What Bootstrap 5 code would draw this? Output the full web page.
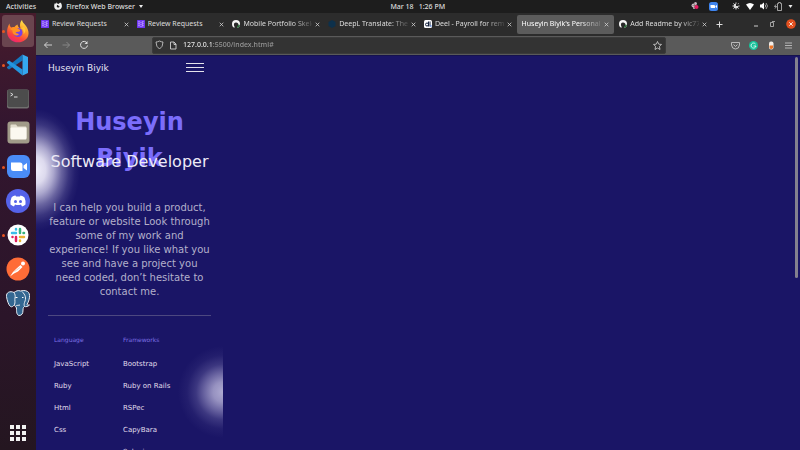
<!DOCTYPE html>
<html lang="en">
<head>
<meta charset="utf-8">
<meta name="viewport" content="width=device-width, initial-scale=1">
<title>Huseyin Biyik's Personal Portfolio</title>
<link href="https://cdn.jsdelivr.net/npm/bootstrap@5.3.0/dist/css/bootstrap.min.css" rel="stylesheet">
<style>
  body { background: #1a1566; font-family: "Noto Sans", "Open Sans", sans-serif; font-size: 7px; line-height: 12px; color: #dedede; }
  button, input { font: inherit; color: inherit; }
  button { background: none; border: 0; padding: 0; line-height: 1; display: flex; align-items: center; justify-content: center; }
  svg { display: block; flex: none; }
  .topbar { background: #1d1d1d; height: 13px; display: grid; grid-template-columns: 11fr auto 10fr; font-weight: 500; }
  .topbar .menus { gap: 18px; padding-left: 6px; }
  .topbar .clock { gap: 5px; }
  .topbar .tray { gap: 6px; padding-right: 7px; }
  .desktop, .browser { min-width: 0; min-height: 0; }
  .dock { width: 36px; padding: 2px 2px 1px; gap: 2px; background: linear-gradient(#471b2c, #33162f 25%, #2b1529 70%, #241620); }
  .launcher { position: relative; width: 32px; height: 32px; border-radius: 3px; flex: none; }
  .launcher.focused { background: #6a454f; }
  .launcher.running::before { content: ""; position: absolute; left: 0; top: 15px; width: 3px; height: 3px; border-radius: 50%; background: #e95420; }
  .tabstrip { background: #2c2c2c; height: 23px; padding: 2px 0 2px 2px; }
  .tab-list { min-width: 0; }
  .tab { flex: 1 1 0; min-width: 0; height: 19px; gap: 3px; padding: 0 5px 0 3px; border-radius: 2px; }
  .tab.current { background: #5c5c5c; padding-left: 5px; margin-right: 2px; color: #fff; }
  .tab-title { flex: 1 1 0; min-width: 0; overflow: hidden; white-space: nowrap; text-align: left; line-height: 12px; }
  .tab-title.faded { mask-image: linear-gradient(90deg, #000 72%, rgba(0,0,0,.15)); -webkit-mask-image: linear-gradient(90deg, #000 72%, rgba(0,0,0,.15)); }
  .window-tools { width: 88px; padding: 0 4px; gap: 11px; }
  .toolbar { background: #5a5a5a; height: 20px; padding: 0 8px 0 7px; }
  .nav-tools { width: 109px; gap: 8px; }
  .address { background: #333; height: 17px; border-radius: 2px; padding: 0 3px 0 2px; gap: 5px; border: 1px solid #3b3b3b; }
  .address input { border: 0; outline: 0; padding: 0; color: transparent; background: linear-gradient(90deg, #f4f4f4 29px, #9b9b9b 29px); -webkit-background-clip: text; background-clip: text; font-weight: 500; }
  .extensions { width: 126px; gap: 9px; }
  .viewport { position: relative; background: #1a1566; border-top: 1px solid #15124e; overflow: hidden; font-family: "DejaVu Sans", sans-serif; }
  .scroll-thumb { position: absolute; right: 2px; top: 1px; width: 3px; height: 56%; border-radius: 2px; background: #83808f; }
  .phone { position: relative; width: 187px; overflow: hidden; padding: 0 12px; }
  .phone > * { position: relative; }
  .phone > .glow { position: absolute; border-radius: 50%; }
  .glow-left { left: -44px; top: 53px; width: 88px; height: 122px; background: radial-gradient(closest-side, rgba(240,238,250,1) 0, rgba(236,233,248,.93) 22%, rgba(228,224,246,.72) 40%, rgba(215,210,240,.42) 58%, rgba(205,200,236,.18) 75%, rgba(200,194,235,.05) 89%, rgba(200,194,235,0)); }
  .glow-right { right: -45px; top: 290px; width: 90px; height: 92px; background: radial-gradient(closest-side, rgba(200,196,228,.85) 0, rgba(194,189,224,.74) 22%, rgba(182,176,218,.5) 42%, rgba(170,164,212,.24) 60%, rgba(160,154,206,.07) 80%, rgba(160,154,206,0)); }
  .site-head { height: 24px; }
  .brand { font-size: 9px; color: #e6e4f2; text-decoration: none; }
  .burger { width: 18px; flex-direction: column; gap: 3px; margin-right: 7px; }
  .burger span { width: 18px; height: 1px; background: #e4e2ec; }
  .hero-name { height: 36px; margin: 24px 0 10px; font-size: 24px; line-height: 36px; font-weight: 700; color: #7b6dfb; }
  .hero-role { font-size: 16px; line-height: 24px; margin: 0 0 27px; color: #eceaf6; white-space: nowrap; }
  .intro { font-size: 10px; line-height: 14px; color: #b3b0cb; margin: 0 0 16px; }
  .rule { margin: 0 0 18px; border: 0; border-top: 1px solid #4d4880; opacity: 1; }
  .skills { display: grid; grid-template-columns: 69px 1fr; padding-left: 6px; }
  .skills h2 { font-size: 6px; line-height: 12px; margin: 0 0 7px; font-weight: 400; color: #7d70e4; }
  .skills li { font-size: 7px; line-height: 22px; color: #e0deec; }
</style>
<script src="https://cdn.jsdelivr.net/npm/bootstrap@5.3.0/dist/js/bootstrap.bundle.min.js"></script>
</head>
<body class="vh-100 d-flex flex-column overflow-hidden">

<header class="topbar align-items-center">
  <div class="menus d-flex align-items-center">
    <button type="button">Activities</button>
    <button type="button" class="gap-1">
      <svg width="8" height="8" viewBox="0 0 16 16" fill="#eee" aria-hidden="true"><path d="M5 0c0 3 3 3 4 4 2-1 2-3 5-2 3 5 2 9-1 12-4 3-10 2-12-2C0 8 0 5 2 2l2 2zM8 6c-2 0-3 2-2 4 2 2 5 1 5-1 0-1-2 0-3-3z"/></svg>
      <span>Firefox Web Browser</span>
      <svg width="4" height="3" viewBox="0 0 4 3" fill="#eee" aria-hidden="true"><path d="M0 0h4L2 3z"/></svg>
    </button>
  </div>
  <button type="button" class="clock"><span>Mar 18</span><span>1:26 PM</span></button>
  <div class="tray d-flex align-items-center justify-content-end">
    <svg width="8" height="8" viewBox="0 0 16 16" class="me-1" aria-label="Slack"><g fill="#c7b7c2"><circle cx="5" cy="7" r="4"/><circle cx="9" cy="3" r="3"/><circle cx="6" cy="12" r="2"/></g><path d="M3 7h9M7 3v9" stroke="#665" stroke-width="1"/><circle cx="11" cy="10" r="4" fill="#e71d62"/></svg>
    <svg width="9" height="9" viewBox="0 0 18 18" class="me-2" aria-label="Zoom"><rect width="18" height="18" rx="5" fill="#3e84ee"/><path d="M3 6h7q2 0 2 2v4H5q-2 0-2-2zm10 2 3-2v6l-3-2z" fill="#fff"/></svg>
    <svg width="8" height="8" viewBox="0 0 16 16" aria-label="Night light"><path d="M8 0v16M0 8h16M2 2l12 12M14 2 2 14" stroke="#bbb" stroke-width="1.4"/><circle cx="8" cy="8" r="5" fill="#ddd"/><path d="M8 8V3a5 5 0 0 1 5 5z" fill="#222"/></svg>
    <svg width="8" height="7" viewBox="0 0 16 14" fill="#fff" aria-label="Wi-Fi"><path d="M0 3q8-6 16 0L8 14z"/></svg>
    <svg width="8" height="8" viewBox="0 0 16 16" aria-label="Volume"><path d="M0 5h3l5-4v14l-5-4H0z" fill="#fff"/><path d="M10 5q3 3 0 6M12 2q6 6 0 12" fill="none" stroke="#bbb" stroke-width="1.6"/></svg>
    <svg width="8" height="9" viewBox="0 0 16 18" fill="none" stroke="#ccc" stroke-width="1.5" aria-label="Battery"><path d="M7 3h2V1h4v2h2v14H7zM4 5 1 9h4l-3 4"/></svg>
    <svg width="5" height="3" viewBox="0 0 4 3" fill="#eee" aria-hidden="true"><path d="M0 0h4L2 3z"/></svg>
  </div>
</header>

<div class="desktop d-flex flex-grow-1">
  <nav class="dock d-flex flex-column flex-shrink-0" aria-label="Applications">
    <button type="button" class="launcher focused running" aria-label="Firefox">
      <svg width="24" height="24" viewBox="0 0 48 48"><defs><linearGradient id="ff" x1=".8" y1="0" x2=".3" y2="1"><stop stop-color="#fff14f"/><stop offset=".4" stop-color="#ff9a26"/><stop offset=".75" stop-color="#fa443d"/><stop offset="1" stop-color="#ee2174"/></linearGradient></defs><path d="M7 9c0 4 1 6 4 8 2-1 4-1 6-1 2-3 4-4 6-5 0 3 2 6 6 8-2-7-1-13 3-17 1 5 4 7 8 12 8 11 6 23-2 28-8 7-23 6-30-2C1 33 0 20 7 9z" fill="url(#ff)"/><circle cx="24" cy="27" r="9" fill="#7542e5"/><path d="M8 20c6-5 12-4 16-1 3 2 5 3 4 5-2 3-7 0-9 4 3 1 6 1 7 3-6 5-14-1-13-8z" fill="#ff9223"/><path d="M30 18c5 3 6 8 5 12 5-4 5-10 1-14z" fill="#ffc53a"/></svg>
    </button>
    <button type="button" class="launcher running" aria-label="Visual Studio Code">
      <svg width="22" height="22" viewBox="0 0 44 44"><path d="M4 31 0 28v-2L31 1v12z" fill="#1476bd"/><path d="M4 13 0 16v2l31 25V31z" fill="#2495de"/><path d="M31 1 42 6v32l-11 5z" fill="#35a8ef"/></svg>
    </button>
    <button type="button" class="launcher" aria-label="Terminal">
      <svg width="22" height="20" viewBox="0 0 44 40"><rect width="44" height="38" rx="4" y="1" fill="#71706f"/><rect x="1" y="1" width="42" height="35" rx="4" fill="#4c4c4c"/><path d="m7 8 5 3-5 3M14 16h7" fill="none" stroke="#ddd" stroke-width="2"/></svg>
    </button>
    <button type="button" class="launcher" aria-label="Files">
      <svg width="23" height="23" viewBox="0 0 46 46"><rect x="1" y="1" width="44" height="44" rx="6" fill="#a19b89"/><path d="M7 9q0-2 2-2h9l3 4h16q2 0 2 2v20q0 2-2 2H9q-2 0-2-2z" fill="#e3decf"/><rect x="7" y="13" width="32" height="24" rx="2" fill="#fbf8f0"/></svg>
    </button>
    <button type="button" class="launcher running" aria-label="Zoom">
      <svg width="23" height="23" viewBox="0 0 46 46"><rect width="46" height="46" rx="12" fill="#4a8cf7"/><path d="M8 15h18q5 0 5 5v12H13q-5 0-5-5zm25 6 7-5v15l-7-5z" fill="#fff"/></svg>
    </button>
    <button type="button" class="launcher" aria-label="Discord">
      <svg width="24" height="24" viewBox="0 0 48 48"><circle cx="24" cy="24" r="24" fill="#5562e9"/><path d="m19 13-1 0q-5 1-7 4-3 7-2 14 4 3 7 4l2-4q6 2 12 0l2 4q4-1 7-4 1-7-2-14-3-3-8-4l-1 2h-8z" fill="#fff"/><circle cx="19" cy="25" r="3" fill="#5562e9"/><circle cx="29" cy="25" r="3" fill="#5562e9"/></svg>
    </button>
    <button type="button" class="launcher running" aria-label="Slack">
      <svg width="22" height="22" viewBox="0 0 44 44"><circle cx="22" cy="22" r="21" fill="#fff"/><g fill="none" stroke-width="5" stroke-linecap="round"><path d="M18 10v1M10 18h8" stroke="#3bbdea"/><path d="M26 10v8M34 18h-1" stroke="#37b27c"/><path d="M18 26v8M11 26h0" stroke="#df205d"/><path d="M26 33v1M26 26h8" stroke="#eab234"/></g></svg>
    </button>
    <button type="button" class="launcher" aria-label="Postman">
      <svg width="24" height="24" viewBox="0 0 48 48"><circle cx="24" cy="24" r="23" fill="#ff6c37"/><circle cx="34" cy="13" r="4" fill="#fff"/><path d="m29 16 4 4-9 9-8 4-8 6 6-9 6-6z" fill="#fff"/><path d="m17 29 11-8" stroke="#e8a080" stroke-width="1"/></svg>
    </button>
    <button type="button" class="launcher" aria-label="PostgreSQL">
      <svg width="24" height="26" viewBox="0 0 48 52"><path d="M16 5C8 1 0 5 1 13c1 7 4 17 8 20 3 2 6-1 8-4 0 5 3 3 4 7 0 7 0 14 5 15 6 0 8-4 8-11 0-4 1-6 3-7 3 1 7 0 10-3-3 0-5 0-5-1 5-8 8-22 1-26-5-3-10-2-14-1-5-2-9 0-13 3z" fill="#336791" stroke="#e8edf3" stroke-width="2"/><path d="M17 29c2-4 0-9 1-13 1-4 0-8-2-11M32 3c7 7 9 13 5 22-1 3-1 5 0 8M20 32c2-2 5-1 8-2" fill="none" stroke="#e8edf3" stroke-width="2"/><path d="M19 15h4M32 15h3" stroke="#fff" stroke-width="2"/></svg>
    </button>
    <button type="button" class="launcher mt-auto" aria-label="Show applications">
      <svg width="16" height="16" viewBox="0 0 16 16" fill="#f2f2f2"><path d="M0 0h4v4H0zM6 0h4v4H6zM12 0h4v4h-4zM0 6h4v4H0zM6 6h4v4H6zM12 6h4v4h-4zM0 12h4v4H0zM6 12h4v4H6zM12 12h4v4h-4z"/></svg>
    </button>
  </nav>

  <main class="browser d-flex flex-column flex-grow-1">
    <svg width="0" height="0" class="position-absolute" aria-hidden="true">
      <symbol id="x" viewBox="0 0 5 5"><path d="m.7.7 3.6 3.6M4.3.7.7 4.3" stroke="#d0d0d0" stroke-width=".8"/></symbol>
      <symbol id="review" viewBox="0 0 16 16"><rect width="16" height="16" rx="1" fill="#6f36f0"/><path d="M2 4q2-3 4 0t4 0 4 0M2 8q2-3 4 0t4 0 4 0M2 12q2-3 4 0t4 0 4 0M4 3v10M11 3v10" fill="none" stroke="#c9b2ff" stroke-width="1.1"/></symbol>
      <symbol id="hub" viewBox="0 0 16 16"><circle cx="8" cy="8" r="8" fill="#f5f5f5"/><path d="M5 16v-3l-1-2q-1-6 4-6t5 5q0 4-3 4v2z" fill="#2a2a2a"/><path d="M10 16q5-1 6-6l-3-1q0 3-3 4z" fill="#256e35"/></symbol>
    </svg>
    <div class="tabstrip d-flex align-items-center">
      <div class="tab-list d-flex flex-grow-1" role="tablist">
        <div class="tab d-flex align-items-center"><svg width="8" height="8"><use href="#review"/></svg><button type="button" role="tab" class="tab-title d-block">Review Requests</button><button type="button" aria-label="Close tab"><svg width="5" height="5"><use href="#x"/></svg></button></div>
        <div class="tab d-flex align-items-center"><svg width="8" height="8"><use href="#review"/></svg><button type="button" role="tab" class="tab-title d-block">Review Requests</button><button type="button" aria-label="Close tab"><svg width="5" height="5"><use href="#x"/></svg></button></div>
        <div class="tab d-flex align-items-center"><svg width="8" height="8"><use href="#hub"/></svg><button type="button" role="tab" class="tab-title faded d-block">Mobile Portfolio Skeleton</button><button type="button" aria-label="Close tab"><svg width="5" height="5"><use href="#x"/></svg></button></div>
        <div class="tab d-flex align-items-center"><svg width="8" height="8" viewBox="0 0 16 16"><path d="m8 0 7 4v8l-7 4-7-4V4z" fill="#0d304b"/></svg><button type="button" role="tab" class="tab-title faded d-block">DeepL Translate: The world</button><button type="button" aria-label="Close tab"><svg width="5" height="5"><use href="#x"/></svg></button></div>
        <div class="tab d-flex align-items-center"><svg width="8" height="8" viewBox="0 0 16 16"><rect width="16" height="16" rx="3" fill="#fff"/><circle cx="6" cy="9" r="3" fill="none" stroke="#15233f" stroke-width="2"/><path d="M9 3v10M12 3v10" stroke="#15233f" stroke-width="2"/><circle cx="14" cy="12" r="1.5" fill="#3c78e8"/></svg><button type="button" role="tab" class="tab-title faded d-block">Deel - Payroll for remote teams</button><button type="button" aria-label="Close tab"><svg width="5" height="5"><use href="#x"/></svg></button></div>
        <div class="tab current d-flex align-items-center"><button type="button" role="tab" aria-selected="true" class="tab-title faded d-block">Huseyin Biyik's Personal Portfolio</button><button type="button" aria-label="Close tab"><svg width="5" height="5"><use href="#x"/></svg></button></div>
        <div class="tab d-flex align-items-center"><svg width="8" height="8"><use href="#hub"/></svg><button type="button" role="tab" class="tab-title faded d-block">Add Readme by vic778</button><button type="button" aria-label="Close tab"><svg width="5" height="5"><use href="#x"/></svg></button></div>
      </div>
      <div class="window-tools d-flex align-items-center flex-shrink-0">
        <button type="button" class="me-auto" aria-label="New tab"><svg width="7" height="7" viewBox="0 0 7 7"><path d="M3.5.5v6M.5 3.5h6" stroke="#ddd"/></svg></button>
        <button type="button" aria-label="Minimize"><svg width="5" height="5" viewBox="0 0 5 5"><path d="M0 4h4" stroke="#ccc"/></svg></button>
        <button type="button" aria-label="Restore"><svg width="5" height="6" viewBox="0 0 5 6"><path d="M.5 1.5h3v4h-3zM2 .5h3" fill="none" stroke="#bbb" stroke-width=".8"/></svg></button>
        <button type="button" aria-label="Close window"><svg width="10" height="10" viewBox="0 0 10 10"><circle cx="5" cy="5" r="4.8" fill="#e2501f"/><path d="m3.3 3.3 3.4 3.4m0-3.4L3.3 6.7" stroke="#fff" stroke-width=".9"/></svg></button>
      </div>
    </div>

    <div class="toolbar d-flex align-items-center">
      <div class="nav-tools d-flex align-items-center flex-shrink-0">
        <button type="button" aria-label="Back"><svg width="10" height="10" viewBox="0 0 20 20" fill="none" stroke="#ddd" stroke-width="1.8"><path d="M18 10H3m6-6-6 6 6 6"/></svg></button>
        <button type="button" aria-label="Forward"><svg width="10" height="10" viewBox="0 0 20 20" fill="none" stroke="#8b8b8b" stroke-width="1.8"><path d="M3 10h14m-6-6 6 6-6 6"/></svg></button>
        <button type="button" aria-label="Reload"><svg width="10" height="10" viewBox="0 0 20 20" fill="none" stroke="#ddd" stroke-width="2"><path d="M16 6a7 7 0 1 0 1 5"/><path d="M17 2v6h-6z" fill="#ddd" stroke="none"/></svg></button>
      </div>
      <div class="address d-flex align-items-center flex-grow-1">
        <svg width="9" height="10" viewBox="0 0 18 20" fill="none" stroke="#d2d2d2" stroke-width="1.6" aria-hidden="true"><path d="M9 2q4 2 7 2 0 10-7 14Q2 14 2 4q3 0 7-2z"/></svg>
        <svg width="9" height="9" viewBox="0 0 18 18" fill="none" stroke="#d2d2d2" stroke-width="1.8" aria-hidden="true"><path d="M3 2h7l4 4v10H3zM10 2v5h4"/></svg>
        <input type="text" class="flex-grow-1" aria-label="Address" value="127.0.0.1:5500/index.html#">
        <button type="button" aria-label="Bookmark this page"><svg width="9" height="9" viewBox="0 0 18 18" fill="none" stroke="#ddd" stroke-width="1.5"><path d="m9 1 2.4 5.3 5.6.6-4.2 3.8L14 17l-5-3-5 3 1.2-6.3L1 6.900l5.600-.6z"/></svg></button>
      </div>
      <div class="extensions d-flex align-items-center justify-content-end flex-shrink-0">
        <button type="button" aria-label="Save to Pocket"><svg width="9" height="9" viewBox="0 0 18 18" fill="none" stroke="#d2d2d2" stroke-width="1.6"><path d="M1 3h16v5q-1 8-8 8T1 8zM5 7l4 4 4-4"/></svg></button>
        <button type="button" aria-label="Grammarly"><svg width="9" height="9" viewBox="0 0 18 18"><circle cx="9" cy="9" r="9" fill="#15c39a"/><path d="M13 6a5 5 0 1 0 1 4H9" fill="none" stroke="#fff" stroke-width="1.6"/></svg></button>
        <button type="button" aria-label="Color tool"><svg width="9" height="9" viewBox="0 0 18 18"><rect x="4" y="1" width="9" height="16" rx="4" fill="#f3eee9"/><path d="M5 9h7v4q-1 3-3.500 3T5 13z" fill="#ec7426"/></svg></button>
        <button type="button" aria-label="Menu"><svg width="7" height="7" viewBox="0 0 7 7"><path d="M0 1h7M0 3.5h7M0 6h7" stroke="#ccc" stroke-width=".8"/></svg></button>
      </div>
    </div>

    <section class="viewport flex-grow-1">
      <div class="phone">
        <div class="glow glow-left"></div>
        <div class="glow glow-right"></div>
        <div class="site-head d-flex align-items-center justify-content-between">
          <a class="brand" href="#">Huseyin Biyik</a>
          <button type="button" class="burger" aria-label="Open menu"><span></span><span></span><span></span></button>
        </div>
        <h1 class="hero-name text-center">Huseyin Biyik</h1>
        <p class="hero-role text-center">Software Developer</p>
        <p class="intro text-center">I can help you build a product, feature or website Look through some of my work and experience! If you like what you see and have a project you need coded, don’t hesitate to contact me.</p>
        <hr class="rule">
        <div class="skills">
          <div>
            <h2>Language</h2>
            <ul class="list-unstyled mb-0"><li>JavaScript</li><li>Ruby</li><li>Html</li><li>Css</li></ul>
          </div>
          <div>
            <h2>Frameworks</h2>
            <ul class="list-unstyled mb-0"><li>Bootstrap</li><li>Ruby on Rails</li><li>RSPec</li><li>CapyBara</li><li>Selenium</li></ul>
          </div>
        </div>
      </div>
      <div class="scroll-thumb"></div>
    </section>
  </main>
</div>
</body>
</html>
